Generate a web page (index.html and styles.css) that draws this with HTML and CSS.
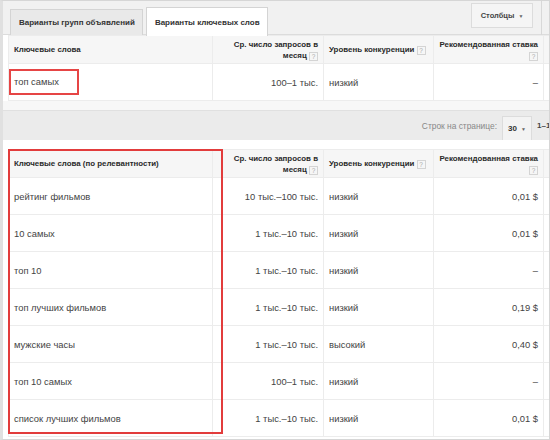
FILE: index.html
```html
<!DOCTYPE html>
<html>
<head>
<meta charset="utf-8">
<link rel="stylesheet" href="styles.css">
</head>
<body>
<div class="frame">
  <div class="topbar">
    <div class="tabs">
      <div class="tab">Варианты групп объявлений</div>
      <div class="tab active">Варианты ключевых слов</div>
    </div>
    <div class="tools">
      <div class="colbtn">Столбцы <span class="caret">▼</span></div>
      <div class="edge"></div>
    </div>
  </div>
  <div class="panel">
    <table class="kw">
      <colgroup><col class="c1"><col class="c2"><col class="c3"><col class="c4"><col class="c5"></colgroup>
      <tr class="head">
        <th class="left">Ключевые слова</th>
        <th class="num">Ср. число запросов в<br>месяц <span class="q">?</span></th>
        <th class="left">Уровень конкуренции <span class="q">?</span></th>
        <th class="num">Рекомендованная ставка<br><span class="q">?</span></th>
        <th></th>
      </tr>
      <tr class="row">
        <td><span class="mark">топ самых</span></td>
        <td class="num">100–1 тыс.</td>
        <td>низкий</td>
        <td class="num">–</td>
        <td></td>
      </tr>
    </table>
    <div class="spacer"></div>
    <div class="pager">
      <span class="plabel">Строк на странице:</span>
      <span class="psel">30 <span class="caret">▼</span></span>
      <span class="prange">1–1</span>
    </div>
    <div class="gap"></div>
    <div class="t2wrap">
      <div class="redbox"></div>
      <table class="kw">
        <colgroup><col class="c1"><col class="c2"><col class="c3"><col class="c4"><col class="c5"></colgroup>
        <tr class="head">
          <th class="left">Ключевые слова (по релевантности)</th>
          <th class="num">Ср. число запросов в<br>месяц <span class="q">?</span></th>
          <th class="left">Уровень конкуренции <span class="q">?</span></th>
          <th class="num">Рекомендованная ставка<br><span class="q">?</span></th>
          <th></th>
        </tr>
        <tr class="row"><td>рейтинг фильмов</td><td class="num">10 тыс.–100 тыс.</td><td>низкий</td><td class="num">0,01 $</td><td></td></tr>
        <tr class="row"><td>10 самых</td><td class="num">1 тыс.–10 тыс.</td><td>низкий</td><td class="num">0,01 $</td><td></td></tr>
        <tr class="row"><td>топ 10</td><td class="num">1 тыс.–10 тыс.</td><td>низкий</td><td class="num">–</td><td></td></tr>
        <tr class="row"><td>топ лучших фильмов</td><td class="num">1 тыс.–10 тыс.</td><td>низкий</td><td class="num">0,19 $</td><td></td></tr>
        <tr class="row"><td>мужские часы</td><td class="num">1 тыс.–10 тыс.</td><td>высокий</td><td class="num">0,40 $</td><td></td></tr>
        <tr class="row"><td>топ 10 самых</td><td class="num">100–1 тыс.</td><td>низкий</td><td class="num">–</td><td></td></tr>
        <tr class="row"><td>список лучших фильмов</td><td class="num">1 тыс.–10 тыс.</td><td>низкий</td><td class="num">0,01 $</td><td></td></tr>
      </table>
    </div>
  </div>
</div>
</body>
</html>
```
FILE: styles.css
```css
* { box-sizing: border-box; }
html, body { margin: 0; padding: 0; background: #fff; }
body { font-family: "Liberation Sans", Arial, sans-serif; color: #333; font-size: 9.4px; }
.frame {
  width: 550px; height: 440px; overflow: hidden;
  border: 1px solid #d6d6d6;
  border-left: 3px solid #e0e0e0;
  background: #fff;
  padding-left: 2px;
}
.topbar {
  height: 34px; background: #f1f1f1;
  display: flex; justify-content: space-between; align-items: flex-start;
  border-bottom: 1px solid #dcdcdc;
  margin-left: -2px;
}
.tabs { display: flex; align-items: flex-end; height: 34px; padding-left: 7px; gap: 3px; }
.tab {
  height: 26px; padding: 0 7px 0 8px; display: flex; align-items: center;
  background: #e9e9e9; border: 1px solid #d4d4d4; border-bottom: none;
  font-weight: bold; font-size: 8px; color: #333; white-space: nowrap;
}
.tab.active { background: #fff; height: 29px; margin-bottom: -1px; padding: 0 7px 0 8px; }
.tools { display: flex; align-items: flex-start; height: 34px; }
.colbtn {
  margin-top: 2px; height: 25px; width: 62px; display: flex; align-items: center; justify-content: center;
  background: #f5f5f5; border: 1px solid #dcdcdc; font-weight: bold; font-size: 7.5px; color: #444; white-space: nowrap;
}
.caret { font-size: 5px; color: #666; margin-left: 4px; }
.edge { width: 1px; height: 34px; background: #d8d8d8; margin-left: 8px; margin-right: 7px; }
.panel { padding-left: 3px; }
table.kw { border-collapse: collapse; table-layout: fixed; width: 600px; }
col.c1 { width: 204px; }
col.c2 { width: 111px; }
col.c3 { width: 110px; }
col.c4 { width: 110px; }
col.c5 { width: 65px; }
table.kw th, table.kw td { border: 1px solid #ececec; padding: 0 5px; white-space: nowrap; }
tr.head th { height: 28px; background: #f6f6f6; font-weight: bold; font-size: 7.9px; color: #2a2a2a; line-height: 11px; }
tr.head th.left { text-align: left; }
tr.row td { height: 37px; background: #fff; font-size: 9.4px; color: #444; }
th.num, td.num { text-align: right; }
.q {
  display: inline-block; width: 9px; height: 9px; border: 1px solid #d4d4d4; color: #aaa;
  font-size: 6.5px; line-height: 7px; text-align: center; font-weight: normal; vertical-align: -1px;
}
.mark { outline: 2px solid #e64545; display: inline-block; padding: 5px 18px 6px 3px; margin-left: -3px; }
.spacer { height: 10px; background: #f7f7f7; border-bottom: 1px solid #e0e0e0; margin-left: -5px; }
.pager {
  height: 29px; background: #ebebeb; margin-left: -5px;
  display: flex; align-items: flex-end; justify-content: flex-end; gap: 5px;
  white-space: nowrap; overflow: hidden;
}
.plabel { color: #888; font-size: 8.4px; align-self: center; }
.psel { background: #f3f3f3; border: 1px solid #dcdcdc; border-bottom: none; height: 24px; width: 30px; display: flex; align-items: center; justify-content: center; font-weight: bold; font-size: 8px; color: #333; }
.prange { font-weight: bold; font-size: 8px; color: #444; width: 12px; overflow: hidden; align-self: center; }
.gap { height: 9px; }
.t2wrap { position: relative; }
.redbox { position: absolute; left: 0; top: 0; width: 215px; height: 285px; border: 2px solid #e23c3c; pointer-events: none; z-index: 2; }
```
